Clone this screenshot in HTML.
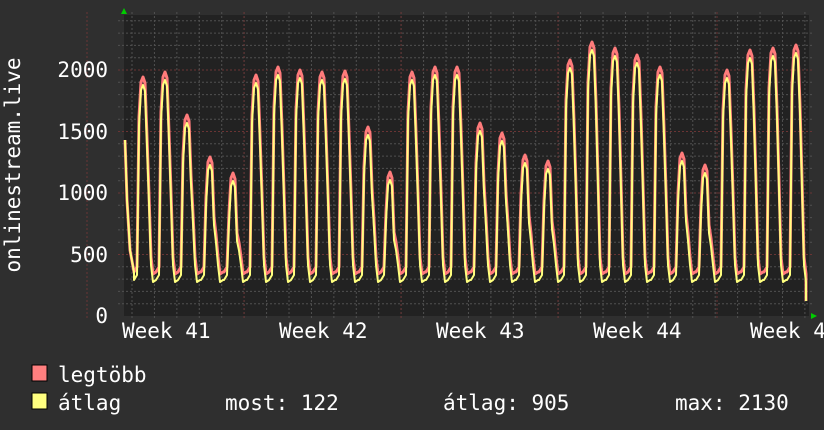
<!DOCTYPE html>
<html><head><meta charset="utf-8"><style>
html,body{margin:0;padding:0;background:#2f2f2f;width:824px;height:430px;overflow:hidden}
svg{display:block}
text{font-family:"DejaVu Sans Mono","Liberation Mono",monospace;fill:#fff;font-size:21px}
</style></head><body>
<svg id="g" width="824" height="430" xmlns="http://www.w3.org/2000/svg">
<rect x="0" y="0" width="824" height="430" fill="#2f2f2f"/>
<rect x="124" y="15" width="685" height="301" fill="#222"/>
<g id="grid"></g>
<path id="mx" fill="none" stroke="#ff7b7b" stroke-width="3" stroke-linejoin="round"/>
<path id="av" fill="none" stroke="#ffff7f" stroke-width="2" stroke-linejoin="round"/>
<polygon points="121,14 127,14 124,8" fill="#0c0"/>
<polygon points="811,313 811,319 817,316" fill="#0c0"/>
<text x="108" y="77" text-anchor="end">2000</text>
<text x="108" y="139" text-anchor="end">1500</text>
<text x="108" y="200" text-anchor="end">1000</text>
<text x="108" y="262" text-anchor="end">500</text>
<text x="108" y="323" text-anchor="end">0</text>
<text transform="translate(20,165) rotate(-90)" text-anchor="middle">onlinestream.live</text>
<text x="122" y="338">Week 41</text>
<text x="279" y="338">Week 42</text>
<text x="436" y="338">Week 43</text>
<text x="593" y="338">Week 44</text>
<text x="750" y="338">Week 4</text>
<rect x="32" y="365" width="15" height="16" fill="#ff7f7f" stroke="#000"/>
<rect x="32" y="393" width="15" height="16" fill="#ffff7f" stroke="#000"/>
<text x="58" y="382">legtöbb</text>
<text x="58" y="410">átlag</text>
<text x="225" y="410">most: 122</text>
<text x="443" y="410">átlag: 905</text>
<text x="675" y="410">max: 2130</text>
</svg>
<script>
var g=document.getElementById('grid'),s='';
function v2y(v){return 316-v*0.123;}
for(var v=100;v<=2400;v+=100){var y=v2y(v);var red=(v%500==0);
s+='<line x1="118" x2="812" y1="'+y+'" y2="'+y+'" stroke="'+(red?'#6a3434':'#505050')+'" stroke-dasharray="2,2"/>';}
for(var x=132;x<809;x+=22.43){s+='<line y1="12" y2="319" x1="'+x+'" x2="'+x+'" stroke="#505050" stroke-dasharray="2,2"/>';}
[87,244,401,558,717].forEach(function(x){s+='<line y1="12" y2="319" x1="'+x+'" x2="'+x+'" stroke="#6a3434" stroke-dasharray="2,2"/>';});
g.innerHTML=s;
var peaks=[[143,77],[165,72],[187,115],[210,157],[233,173],[256,75],[278,67],[300,70],[322,72],[345,71],[368,127],[390,172],[412,72],[435,67],[457,67],[480,123],[502,133],[525,155],[548,161],[570,60],[592,42],[615,48],[637,55],[660,67],[682,153],[705,165],[727,70],[750,50],[773,48],[796,45]];
function build(off,low){var d='M125,140 L127,200 L130,250 L134,272';
peaks.forEach(function(p,i){var x=p[0],y=p[1]+off;
d+=' L'+(x-9)+','+(low)+' L'+(x-6)+','+(low-5)+' L'+(x-4)+','+(y+40)+' L'+(x-2)+','+(y+5)+' L'+x+','+y+' L'+(x+2)+','+(y+6)+' L'+(x+4)+','+(y+60)+' L'+(x+6)+','+((y+low)/2+20)+' L'+(x+8)+','+(low-15)+' L'+(x+10)+','+(low+2)+(i<peaks.length-1?' L'+(x+13)+','+(low):' L'+(x+10)+',301');});
return d;}
document.getElementById('mx').setAttribute('d',build(0,272));
document.getElementById('av').setAttribute('d',build(8,280));
</script>
</body></html>
